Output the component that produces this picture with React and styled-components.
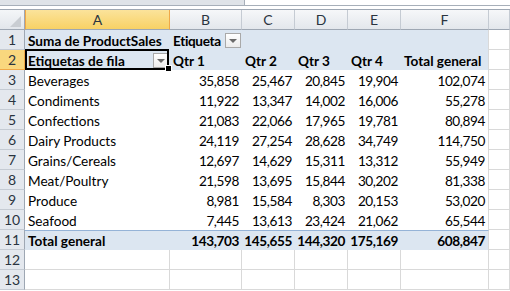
import React from 'react';
import styled, { createGlobalStyle } from 'styled-components';

const GlobalStyle = createGlobalStyle`
  body {
    margin: 0;
    background: #fff;
    font-family: Lato, "Liberation Sans", sans-serif;
  }
`;

const TopStrip = styled.div`
  display: flex;
  height: 6px;
  border-bottom: 1px solid #a7afb9;
  box-sizing: border-box;
`;

const NameBox = styled.div`
  width: 245px;
  background: #dfe3e8;
  border-right: 1px solid #a7afb9;
  box-sizing: border-box;
`;

const Gap = styled.div`
  height: 3px;
`;

const Sheet = styled.div`
  display: grid;
  grid-template-columns: 25px 145px 72px 53px 53px 53px 88px 1fr;
  grid-auto-rows: 20px;
  border-top: 1px solid #9ea7b3;
  font-size: 13.6px;
  color: #000;
`;

const Corner = styled.div`
  background: linear-gradient(#f4f6f8, #e2e6eb);
  border-right: 1px solid #9ea7b3;
  border-bottom: 1px solid #9ea7b3;
  box-sizing: border-box;
  display: flex;
  align-items: flex-end;
  justify-content: flex-end;
  padding: 0 3px 2px 0;
`;

const ColHead = styled.div`
  box-sizing: border-box;
  display: flex;
  align-items: center;
  justify-content: center;
  font-size: 14px;
  color: #2a3440;
  background: ${(p) =>
    p.$active ? 'linear-gradient(#fbe39b, #f8d165)' : 'linear-gradient(#f6f7f9, #e3e7ec)'};
  border-right: 1px solid ${(p) => (p.$active ? '#f0a848' : '#c5cbd3')};
  border-left: ${(p) => (p.$active ? '1px solid #f0a848' : 'none')};
  border-bottom: 1px solid #9ea7b3;
`;

const RowHead = styled.div`
  box-sizing: border-box;
  display: flex;
  align-items: center;
  justify-content: center;
  font-size: 14px;
  color: #2a3440;
  background: ${(p) => (p.$active ? '#f9d77e' : '#e4e8ee')};
  border-right: 1px solid ${(p) => (p.$active ? '#f0a848' : '#9ea7b3')};
  border-bottom: 1px solid ${(p) => (p.$active ? '#f0a848' : '#c5cbd3')};
`;

const Cell = styled.div`
  position: relative;
  box-sizing: border-box;
  display: flex;
  align-items: center;
  justify-content: ${(p) => (p.$right ? 'flex-end' : 'flex-start')};
  padding: 1px ${(p) => (p.$right ? '3px' : '1px')} 0 3px;
  white-space: nowrap;
  overflow: hidden;
  letter-spacing: ${(p) => (p.$right ? '-0.4px' : 'normal')};
  font-weight: ${(p) => (p.$bold ? 700 : 400)};
  background: ${(p) => (p.$blue ? '#dce6f1' : '#fff')};
  border-top: ${(p) => (p.$topLine ? '1px solid #95b3d7' : 'none')};
  border-right: ${(p) => (p.$grid || p.$edge ? '1px solid #d9d9d9' : 'none')};
  border-bottom: ${(p) => (p.$grid ? '1px solid #d9d9d9' : 'none')};
`;

const ActiveCell = styled(Cell)`
  overflow: visible;
  &::after {
    content: '';
    position: absolute;
    top: -1px;
    left: 0;
    right: 1px;
    bottom: 0;
    border: 2px solid #000;
    pointer-events: none;
  }
`;

const FillHandle = styled.span`
  position: absolute;
  right: -2px;
  bottom: -2px;
  width: 5px;
  height: 5px;
  background: #000;
  border: 1px solid #fff;
  z-index: 2;
`;

const Label = styled.span`
  flex: 1;
  min-width: 0;
  letter-spacing: ${(p) => (p.$tight ? '-0.35px' : 'normal')};
`;

const DropButton = styled.span`
  flex: none;
  width: 16px;
  height: 15px;
  box-sizing: border-box;
  margin-left: auto;
  border: 1px solid #a9a9a9;
  background: linear-gradient(#ffffff, #ececec);
  display: flex;
  align-items: center;
  justify-content: center;
  &::before {
    content: '';
    border-left: 4px solid transparent;
    border-right: 4px solid transparent;
    border-top: 4px solid #6a6a6a;
  }
`;

const columns = ['A', 'B', 'C', 'D', 'E', 'F', ''];

const rows = [
  ['Beverages', '35,858', '25,467', '20,845', '19,904', '102,074'],
  ['Condiments', '11,922', '13,347', '14,002', '16,006', '55,278'],
  ['Confections', '21,083', '22,066', '17,965', '19,781', '80,894'],
  ['Dairy Products', '24,119', '27,254', '28,628', '34,749', '114,750'],
  ['Grains/Cereals', '12,697', '14,629', '15,311', '13,312', '55,949'],
  ['Meat/Poultry', '21,598', '13,695', '15,844', '30,202', '81,338'],
  ['Produce', '8,981', '15,584', '8,303', '20,153', '53,020'],
  ['Seafood', '7,445', '13,613', '23,424', '21,062', '65,544'],
];

const total = ['Total general', '143,703', '145,655', '144,320', '175,169', '608,847'];

export default function App() {
  return (
    <>
      <GlobalStyle />
      <TopStrip>
        <NameBox />
      </TopStrip>
      <Gap />
      <Sheet>
        <Corner>
          <svg width="11" height="11" viewBox="0 0 11 11">
            <polygon points="11,0 11,11 0,11" fill="#c9cdd2" />
          </svg>
        </Corner>
        {columns.map((c) => (
          <ColHead key={c || 'G'} $active={c === 'A'}>
            {c}
          </ColHead>
        ))}

        <RowHead>1</RowHead>
        <Cell $blue $bold>Suma de ProductSales</Cell>
        <Cell $blue $bold>
          <Label $tight>Etiqueta</Label>
          <DropButton />
        </Cell>
        <Cell $blue />
        <Cell $blue />
        <Cell $blue />
        <Cell $blue $edge />
        <Cell $grid />

        <RowHead $active>2</RowHead>
        <ActiveCell $blue $bold>
          <Label>Etiquetas de fila</Label>
          <DropButton />
          <FillHandle />
        </ActiveCell>
        <Cell $blue $bold>Qtr 1</Cell>
        <Cell $blue $bold>Qtr 2</Cell>
        <Cell $blue $bold>Qtr 3</Cell>
        <Cell $blue $bold>Qtr 4</Cell>
        <Cell $blue $bold $edge>Total general</Cell>
        <Cell $grid />

        {rows.map((r, i) => (
          <React.Fragment key={r[0]}>
            <RowHead>{i + 3}</RowHead>
            {r.map((v, j) => (
              <Cell key={j} $right={j > 0} $edge={j === 5}>
                {v}
              </Cell>
            ))}
            <Cell $grid />
          </React.Fragment>
        ))}

        <RowHead>11</RowHead>
        {total.map((v, j) => (
          <Cell key={j} $blue $bold $topLine $right={j > 0} $edge={j === 5}>
            {v}
          </Cell>
        ))}
        <Cell $grid />

        {[12, 13].map((n) => (
          <React.Fragment key={n}>
            <RowHead>{n}</RowHead>
            {columns.map((c) => (
              <Cell key={c || 'G'} $grid />
            ))}
          </React.Fragment>
        ))}
      </Sheet>
    </>
  );
}
